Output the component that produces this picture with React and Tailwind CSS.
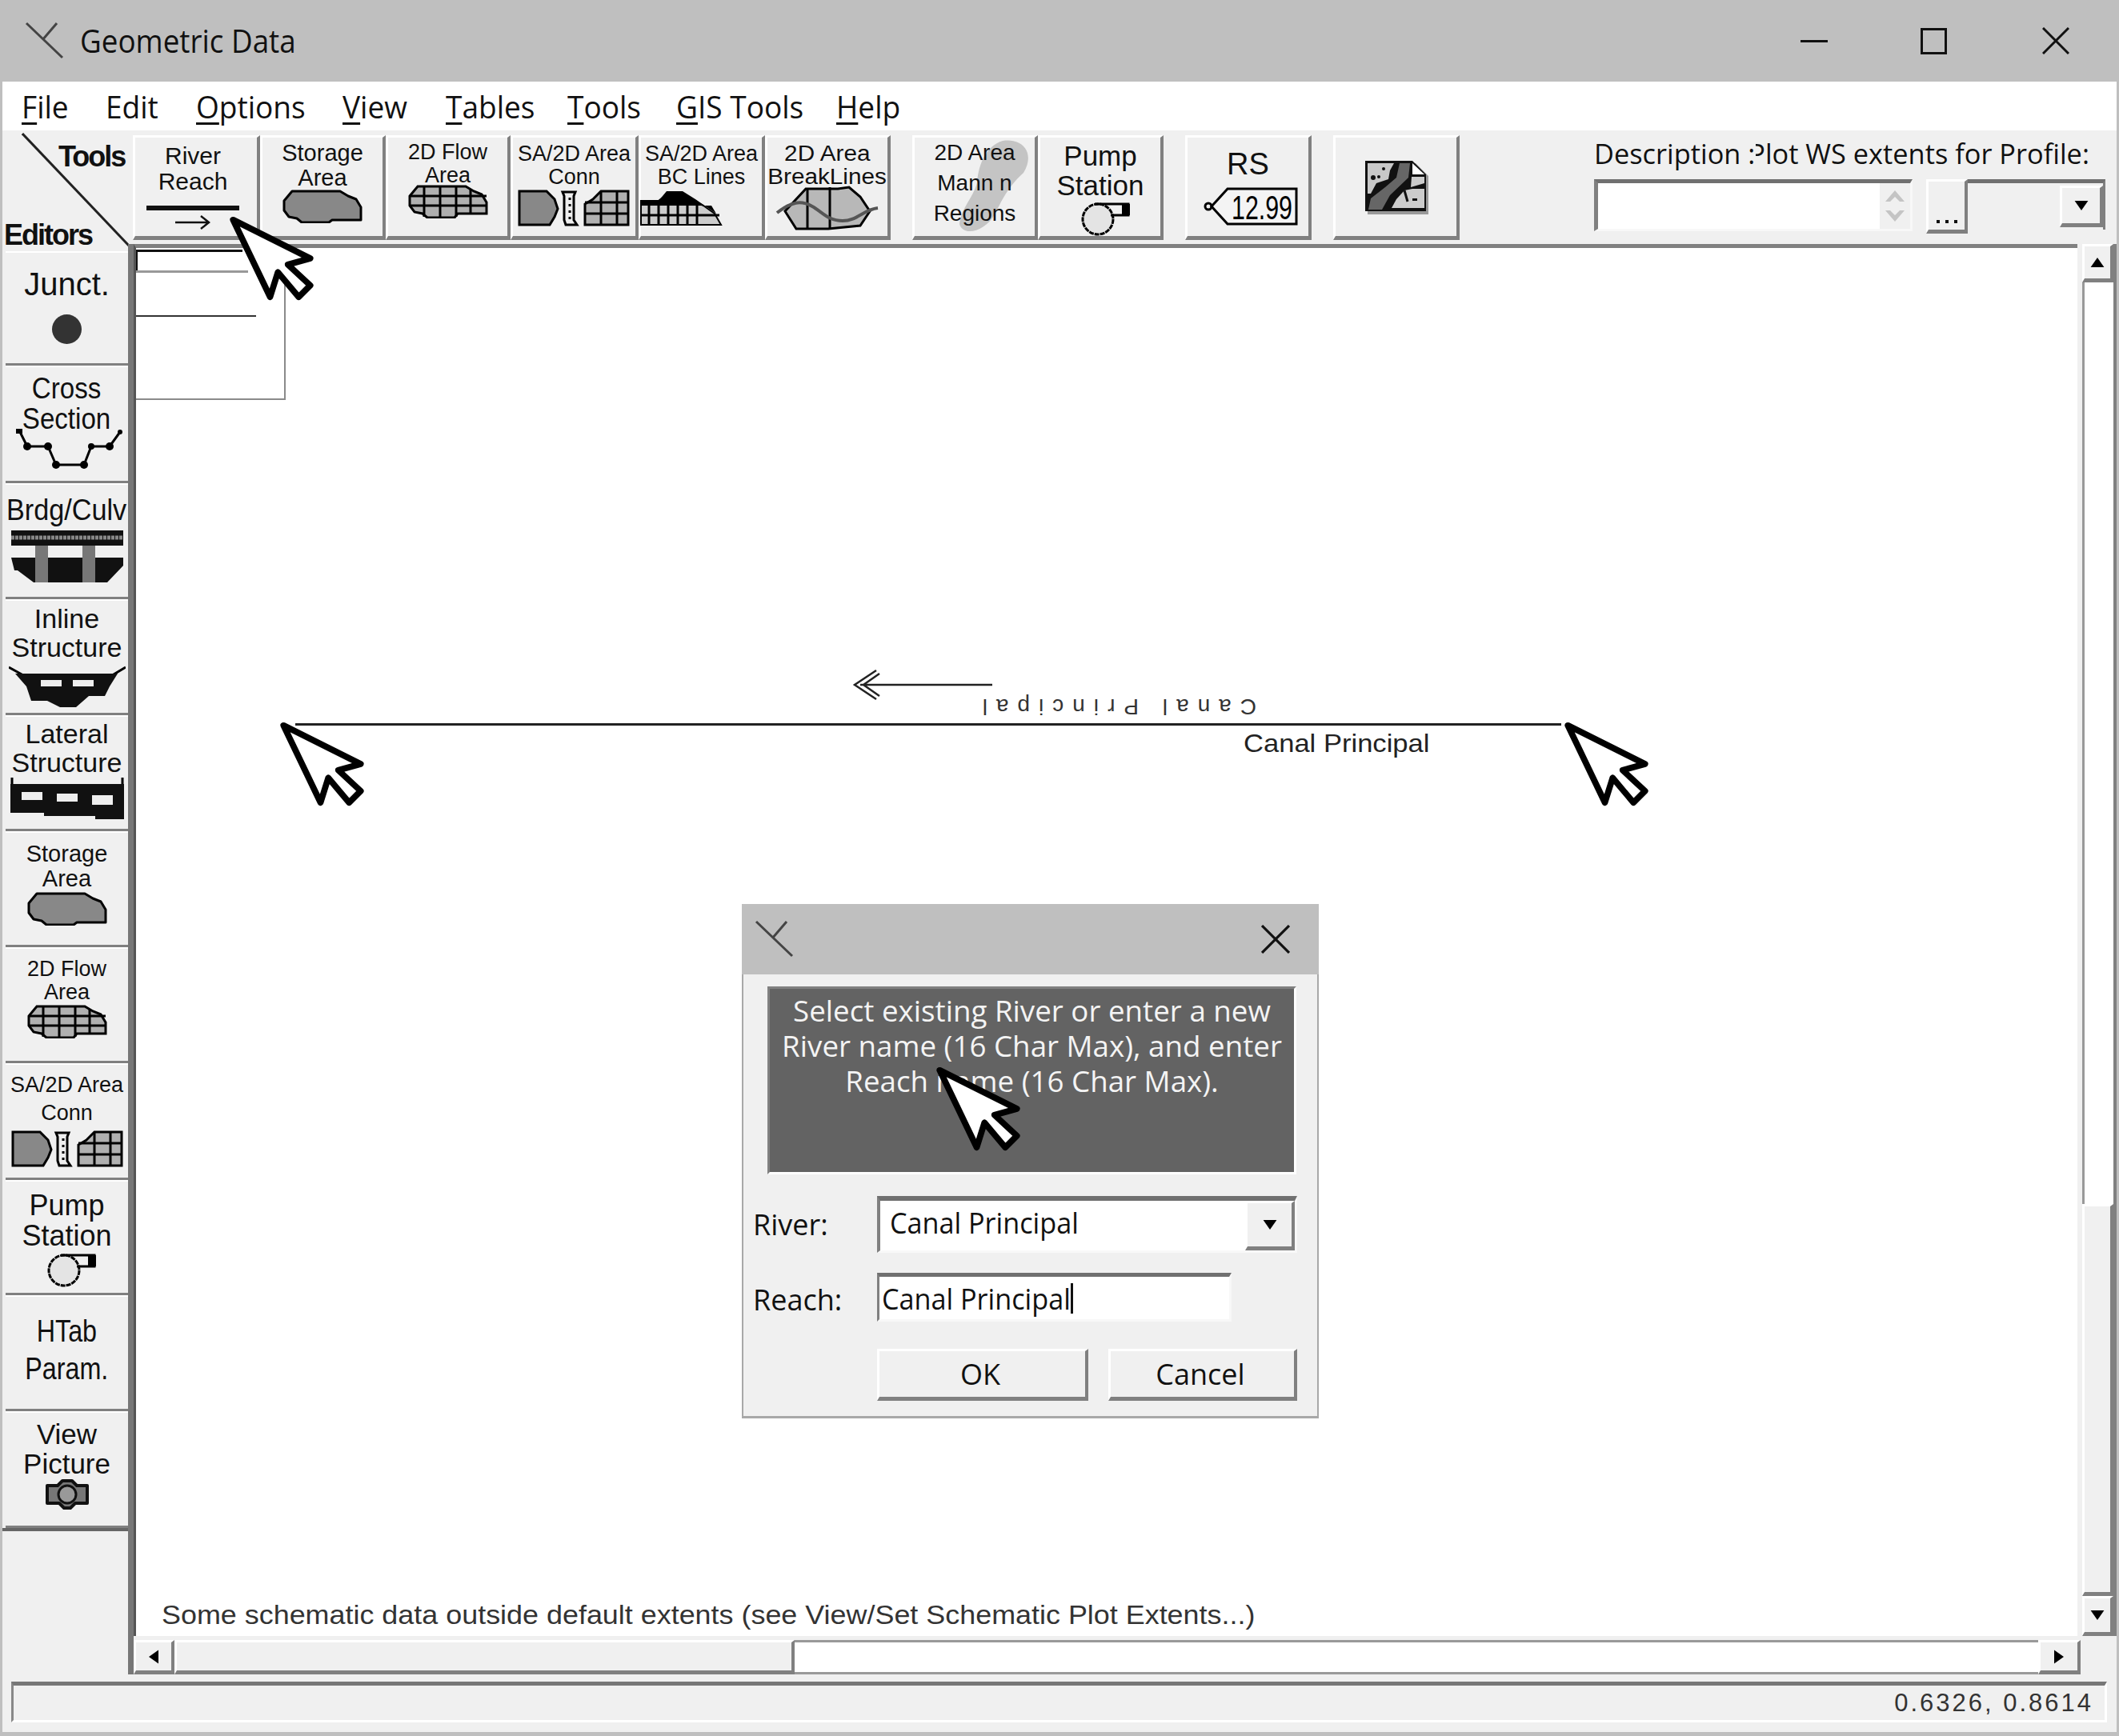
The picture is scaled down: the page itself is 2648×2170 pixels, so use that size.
import React from "react";

const ui = { fontFamily: '"Open Sans", sans-serif' };
const arial = { fontFamily: '"Liberation Sans", sans-serif' };

const Cursor = ({ className }) => (
  <svg className={className} width="109" height="108" viewBox="-6 -6 112 112">
    <path d="M0 0 L100 50 L71 58 L100 85 L85 100 L58 68 L48 100 Z" fill="#fff" stroke="#000" strokeWidth="8" strokeLinejoin="round" />
  </svg>
);

const Logo = () => (
  <svg width="50" height="50" viewBox="0 0 50 50" fill="none" stroke="#444" strokeWidth="3">
    <path d="M3 3 L48 46 M41 3 L23 24" />
  </svg>
);

const Close = ({ size = 34 }) => (
  <svg width={size} height={size} viewBox="0 0 34 34" stroke="#111" strokeWidth="3">
    <path d="M1 1 L33 33 M33 1 L1 33" />
  </svg>
);

const Blob = ({ w = 100 }) => (
  <svg width={w} height={w * 0.42} viewBox="0 0 100 42">
    <path d="M12 2 H72 L82 8 L92 12 L98 22 V38 H62 L58 41 H24 L18 36 L8 34 L2 26 V14 Z" fill="#888" stroke="#000" strokeWidth="3" strokeLinejoin="round" />
  </svg>
);

const Flow = ({ w = 100 }) => (
  <svg width={w} height={w * 0.42} viewBox="0 0 100 42">
    <path d="M12 2 H72 L82 8 L92 12 L98 22 V36 H62 L58 41 H24 L18 36 L8 34 L2 26 V14 Z" fill="#b0b0b0" stroke="#000" strokeWidth="3" />
    <path d="M2 14 H98 M2 26 H98 M20 2 V40 M40 2 V40 M60 2 V40 M78 6 V36" stroke="#000" strokeWidth="3" fill="none" />
  </svg>
);

const Conn = () => (
  <svg width="140" height="46" viewBox="0 0 140 46">
    <path d="M2 2 H36 L46 12 L50 24 L46 34 L40 44 H2 Z" fill="#888" stroke="#000" strokeWidth="3" />
    <path d="M56 3 H72 L70 8 V38 L74 44 H60 L58 38 V8 Z" fill="#eee" stroke="#000" strokeWidth="3" />
    <path d="M65 10 V38" stroke="#000" strokeWidth="3" strokeDasharray="3 5" />
    <path d="M94 12 L104 2 H138 V44 H84 V18 Z" fill="#b0b0b0" stroke="#000" strokeWidth="3" />
    <path d="M84 16 H138 M84 30 H138 M104 2 V44 M124 2 V44" stroke="#000" strokeWidth="3" />
  </svg>
);

const BcLines = () => (
  <svg width="104" height="46" viewBox="0 0 104 46">
    <path d="M2 14 H24 L34 6 H54 L68 14 L80 20 L94 30 L102 44 H2 Z" fill="#ccc" stroke="#000" strokeWidth="2" />
    <path d="M24 14 L34 2 H54 L70 12 L96 30 L90 20 H2 V14 Z" fill="#000" />
    <path d="M2 32 H100 M12 14 V44 M24 14 V44 M36 14 V44 M48 14 V44 M60 14 V44 M72 20 V44" stroke="#000" strokeWidth="3" />
  </svg>
);

const BreakLines = () => (
  <svg width="130" height="56" viewBox="0 0 130 56">
    <path d="M38 4 H78 L92 2 L106 14 L118 32 L106 50 L66 54 H26 L12 32 Z" fill="#b8b8b8" stroke="#000" strokeWidth="3" />
    <path d="M40 4 V54 M68 2 V54" stroke="#000" strokeWidth="3" />
    <path d="M2 34 C20 20 32 18 46 26 S66 44 84 44 S110 30 128 28" fill="none" stroke="#555" strokeWidth="4" />
  </svg>
);

const Pump = () => (
  <svg width="70" height="44" viewBox="0 0 70 44">
    <circle cx="22" cy="23" r="19" fill="#e4e4e4" stroke="#000" strokeWidth="3" strokeDasharray="6 1" />
    <path d="M18 4 H60 V18 H38" fill="none" stroke="#000" strokeWidth="3" />
    <rect x="52" y="4" width="10" height="14" fill="#000" />
  </svg>
);

const Tag = () => (
  <svg width="118" height="48" viewBox="0 0 118 48">
    <circle cx="6" cy="24" r="4" fill="none" stroke="#000" strokeWidth="3" />
    <path d="M10 24 L30 2 H116 V46 H30 Z" fill="#f4f4f4" stroke="#000" strokeWidth="3" />
    <text x="35" y="40" fontSize="42" fontFamily="Liberation Sans" textLength="76" lengthAdjust="spacingAndGlyphs">12.99</text>
  </svg>
);

const MapIcon = () => (
  <svg width="80" height="68" viewBox="0 0 80 68">
    <path d="M4 4 H64 L80 20 V68 H4 Z" fill="#999" />
    <path d="M1 1 H60 L77 18 V64 H1 Z" fill="#111" />
    <path d="M4 4 H37 L32 13 L30 24 L15 29 L8 42 H4 Z" fill="#c8c8c8" />
    <path d="M44 4 H57 L55 22 L32 44 L22 62 H5 L8 48 L26 34 L40 22 Z" fill="#666" />
    <path d="M60 4 L75 18 H60 Z" fill="#fff" />
    <path d="M59 21 H75 V29 L58 34 Z" fill="#ccc" />
    <path d="M50 38 L60 36 H75 V60 H34 L40 49 Z" fill="#ccc" />
    <circle cx="24" cy="11" r="2" fill="#111" /><circle cx="11" cy="22" r="3" fill="#111" /><circle cx="18" cy="21" r="2" fill="#111" />
    <rect x="60" y="48" width="6" height="3" fill="#111" />
    <path d="M50 38 L54 52" stroke="#111" strokeWidth="3" />
  </svg>
);

const Section = () => (
  <svg width="142" height="50" viewBox="0 0 142 50">
    <path d="M11 2 L21 22 H47 L57 45 H92 L101 22 H124 L137 4" fill="none" stroke="#000" strokeWidth="3" />
    <g fill="#000">
      <rect x="7" y="0" width="8" height="6" />
      <circle cx="21" cy="22" r="5" /><circle cx="47" cy="22" r="5" /><circle cx="57" cy="45" r="5" />
      <circle cx="92" cy="45" r="5" /><circle cx="101" cy="22" r="4" /><circle cx="124" cy="22" r="5" /><circle cx="137" cy="4" r="3" />
    </g>
  </svg>
);

const Bridge = () => (
  <svg width="140" height="66" viewBox="0 0 140 66">
    <rect x="0" y="0" width="140" height="19" fill="#111" />
    <path d="M0 9 H140" stroke="#888" strokeWidth="5" strokeDasharray="4 1" />
    <path d="M0 34 H140 V44 L120 65 H28 L8 50 H4 Z" fill="#111" />
    <rect x="30" y="19" width="16" height="46" fill="#777" />
    <rect x="89" y="19" width="16" height="46" fill="#777" />
  </svg>
);

const Inline = () => (
  <svg width="146" height="54" viewBox="0 0 146 54">
    <path d="M0 2 L18 12 M146 2 L126 14" stroke="#000" strokeWidth="3" />
    <path d="M8 10 H136 L126 26 L120 38 H100 L84 52 H64 L48 44 H28 L22 26 Z" fill="#111" />
    <rect x="40" y="18" width="26" height="8" fill="#eee" />
    <rect x="80" y="18" width="26" height="8" fill="#eee" />
  </svg>
);

const Lateral = () => (
  <svg width="142" height="52" viewBox="0 0 142 52">
    <path d="M2 0 V8 M140 0 V8" stroke="#000" strokeWidth="3" />
    <path d="M0 8 H142 V52 H106 V48 H42 V44 H0 Z" fill="#111" />
    <rect x="14" y="18" width="26" height="10" fill="#eee" />
    <rect x="58" y="20" width="26" height="10" fill="#eee" />
    <rect x="102" y="22" width="26" height="12" fill="#eee" />
  </svg>
);

const Camera = () => (
  <svg width="56" height="38" viewBox="0 0 56 38">
    <path d="M3 8 H16 L22 2 H34 L40 8 H53 V30 H38 L32 36 H24 L18 30 H3 Z" fill="#777" stroke="#111" strokeWidth="4" strokeLinejoin="round" />
    <circle cx="28" cy="19" r="11" fill="#999" stroke="#111" strokeWidth="3" />
  </svg>
);

// raised win9x style button
const raised = "bg-[#f0f0f0] border-t-[3px] border-l-[3px] border-b-[5px] border-r-[4px] border-t-white border-l-white border-b-[#808080] border-r-[#808080]";

const Label = ({ lines, size = 30, sx = 1, gap = 2 }) => (
  <div className="flex flex-col items-center" style={arial}>
    {lines.map((l) => (
      <span key={l} className="whitespace-nowrap text-[#111] leading-none block origin-center" style={{ fontSize: size, transform: `scaleX(${sx})`, marginBottom: gap }}>
        {l}
      </span>
    ))}
  </div>
);

const tools = [
  { w: "w-[159px]", pt: "pt-[8px]", ml: "-ml-[8px]", lines: ["River", "Reach"], size: 30, icon: (
    <div className="flex flex-col items-center mt-[13px] gap-[6px]">
      <div className="w-[116px] h-[6px] bg-[#111]" />
      <svg width="44" height="18" viewBox="0 0 44 18" fill="none" stroke="#111" strokeWidth="2.5"><path d="M0 9 H42 M32 1 L42 9 L32 17" /></svg>
    </div>
  ) },
  { w: "w-[157px]", pt: "pt-[5px]", ml: "", lines: ["Storage", "Area"], size: 29, icon: <div className="-mt-[2px]"><Blob /></div> },
  { w: "w-[156px]", pt: "pt-[5px]", ml: "", lines: ["2D Flow", "Area"], size: 27, icon: <div className="-mt-[4px]"><Flow /></div> },
  { w: "w-[160px]", pt: "pt-[7px]", ml: "", lines: ["SA/2D Area", "Conn"], size: 27, icon: <Conn /> },
  { w: "w-[158px]", pt: "pt-[7px]", ml: "", lines: ["SA/2D Area", "BC Lines"], size: 27, icon: <div className="-ml-[50px]"><BcLines /></div> },
  { w: "w-[157px]", pt: "pt-[7px]", ml: "", lines: ["2D Area", "BreakLines"], size: 27, sx: 1.1, icon: <div className="-mt-[5px]"><BreakLines /></div> },
];

const editors = [
  { h: "h-[143px]", pt: "pt-[19px]", lines: ["Junct."], size: 40, icon: <div className="w-[37px] h-[37px] rounded-full bg-[#333] mt-[16px]" /> },
  { h: "h-[147px]", pt: "pt-[9px]", lines: ["Cross", "Section"], size: 36, sx: 0.92, icon: <div className="-mt-[8px]"><Section /></div> },
  { h: "h-[145px]", pt: "pt-[14px]", lines: ["Brdg/Culv"], size: 36, sx: 0.95, icon: <div className="mt-[5px]"><Bridge /></div> },
  { h: "h-[145px]", pt: "pt-[5px]", lines: ["Inline", "Structure"], size: 34, icon: <div className="mt-[4px]"><Inline /></div> },
  { h: "h-[145px]", pt: "pt-[4px]", lines: ["Lateral", "Structure"], size: 34, icon: <Lateral /> },
  { h: "h-[145px]", pt: "pt-[12px]", lines: ["Storage", "Area"], size: 29, icon: <Blob /> },
  { h: "h-[145px]", pt: "pt-[12px]", lines: ["2D Flow", "Area"], size: 27, icon: <Flow /> },
  { h: "h-[146px]", pt: "pt-[12px]", lines: ["SA/2D Area", "Conn"], size: 27, gap: 8, icon: <Conn /> },
  { h: "h-[144px]", pt: "pt-[12px]", lines: ["Pump", "Station"], size: 36, icon: <div className="ml-[18px]"><Pump /></div> },
  { h: "h-[145px]", pt: "pt-[24px]", lines: ["HTab", "Param."], size: 38, sx: 0.85, gap: 9, icon: null },
  { h: "h-[146px]", pt: "pt-[9px]", lines: ["View", "Picture"], size: 35, icon: <Camera /> },
];

const menu = [
  ["F", "ile", "w-[105px]"],
  ["", "Edit", "w-[113px]"],
  ["O", "ptions", "w-[183px]"],
  ["V", "iew", "w-[129px]"],
  ["T", "ables", "w-[152px]"],
  ["T", "ools", "w-[136px]"],
  ["G", "IS Tools", "w-[200px]"],
  ["H", "elp", "w-[100px]"],
];

const Arrow = ({ d }) => {
  const paths = { up: "M0 10 L7 0 L14 10 Z", down: "M0 0 H14 L7 10 Z", left: "M10 0 V14 L0 7 Z", right: "M0 0 V14 L10 7 Z" };
  const vert = d === "up" || d === "down";
  return (
    <svg width={vert ? 18 : 12} height={vert ? 12 : 18} viewBox={vert ? "0 0 14 10" : "0 0 10 14"}>
      <path d={paths[d]} fill="#000" />
    </svg>
  );
};

export default function App() {
  return (
    <div className="w-[2648px] h-[2170px] flex flex-col bg-[#f0f0f0] border-x-[3px] border-b-[5px] border-[#bfbfbf] overflow-hidden text-[#111]" style={ui}>
      {/* title bar */}
      <div className="h-[102px] -mx-[3px] shrink-0 bg-[#bfbfbf] flex items-center pl-[30px]">
        <Logo />
        <span className="ml-[20px] text-[40px] leading-none inline-block origin-left scale-x-[0.92]">Geometric Data</span>
        <div className="ml-auto flex items-center">
          <div className="w-[34px] h-[3px] bg-[#111]" />
          <div className="ml-[116px] w-[33px] h-[33px] border-[3px] border-[#111]" />
          <div className="ml-[119px] mr-[62px]"><Close /></div>
        </div>
      </div>

      {/* menu */}
      <div className="h-[61px] shrink-0 bg-white flex items-center pl-[24px] text-[39px]">
        {menu.map(([u, rest, w]) => (
          <span key={rest} className={`${w} leading-none whitespace-nowrap inline-block origin-left scale-x-[0.95]`}>
            {u && <span className="underline decoration-[3px] underline-offset-[5px]">{u}</span>}
            {rest}
          </span>
        ))}
      </div>

      {/* toolbar */}
      <div className="h-[142px] shrink-0 flex relative pt-[6px]">
        <div className="w-[163px] shrink-0 relative">
          <svg className="absolute left-[24px] top-[-3px]" width="140" height="142" viewBox="0 0 140 142"><path d="M1 1 L134 141" stroke="#222" strokeWidth="3" /></svg>
          <span className="absolute left-[70px] top-[9px] text-[36px] font-bold leading-none tracking-[-2px]" style={arial}>Tools</span>
          <span className="absolute left-[2px] top-[107px] text-[36px] font-bold leading-none tracking-[-2px]" style={arial}>Editors</span>
        </div>
        {tools.map((t) => (
          <div key={t.lines[1]} className={`${t.w} h-[131px] shrink-0 ${raised} flex flex-col items-center ${t.pt}`}>
            <div className={`${t.ml} flex flex-col items-center`}>
              <Label lines={t.lines} size={t.size} sx={t.sx} />
              {t.icon}
            </div>
          </div>
        ))}
        <div className="w-[27px] shrink-0" />
        <div className={`w-[157px] h-[131px] shrink-0 ${raised} relative flex flex-col items-center pt-[5px]`}>
          <svg className="absolute left-[28px] top-[0px]" width="124" height="124" viewBox="0 0 124 124">
            <path d="M82 4 C110 0 122 22 108 44 C90 60 82 76 72 96 C60 118 32 124 28 108 C30 88 46 74 50 56 C52 32 62 10 82 4 Z" fill="#c4c4c4" />
          </svg>
          <div className="relative">
            <Label lines={["2D Area", "Mann n", "Regions"]} size={28} gap={10} />
          </div>
        </div>
        <div className={`w-[157px] h-[131px] shrink-0 ${raised} flex flex-col items-center pt-[5px]`}>
          <Label lines={["Pump", "Station"]} size={35} />
          <div className="ml-[20px]"><Pump /></div>
        </div>
        <div className="w-[27px] shrink-0" />
        <div className={`w-[158px] h-[131px] shrink-0 ${raised} flex flex-col items-center pt-[14px]`}>
          <Label lines={["RS"]} size={38} />
          <div className="mt-[8px] ml-[6px]"><Tag /></div>
        </div>
        <div className="w-[27px] shrink-0" />
        <div className={`w-[158px] h-[131px] shrink-0 ${raised} flex items-center justify-center`}>
          <MapIcon />
        </div>
        <div className="ml-[168px] w-[640px] shrink-0 flex flex-col">
          <div className="text-[34px] leading-none whitespace-nowrap flex origin-left scale-x-[1.01] mt-[6px]">
            <span className="relative z-10 bg-[#f0f0f0] pr-[1px]">Description :</span>
            <span className="-ml-[9px]">Plot WS extents for Profile:</span>
          </div>
          <div className="mt-[15px] flex h-[66px]">
            <div className="w-[398px] h-[65px] bg-white border-t-[5px] border-l-[5px] border-b-[3px] border-r-[3px] border-t-[#707070] border-l-[#808080] border-b-[#f8f8f8] border-r-[#f8f8f8] flex justify-end">
              <div className="w-[38px] bg-[#f0f0f0] flex flex-col items-center justify-around py-[3px]">
                <svg width="24" height="14" viewBox="0 0 24 14"><path d="M0 14 L12 0 L24 14 H18 L12 8 L6 14 Z" fill="#c4c4c4" /></svg>
                <svg width="24" height="14" viewBox="0 0 24 14"><path d="M0 0 L12 14 L24 0 H18 L12 6 L6 0 Z" fill="#c4c4c4" /></svg>
              </div>
            </div>
            <div className="w-[17px]" />
            <div className={`w-[52px] h-[68px] ${raised} flex items-end justify-center pb-[8px]`}>
              <span className="flex gap-[7px]"><i className="w-[4px] h-[4px] bg-[#111] block" /><i className="w-[4px] h-[4px] bg-[#111] block" /><i className="w-[4px] h-[4px] bg-[#111] block" /></span>
            </div>
            <div className="w-[172px] h-[63px] border-t-[5px] border-r-[3px] border-t-[#707070] border-r-[#808080] flex justify-end">
              <div className={`w-[54px] h-[52px] ${raised} flex items-center justify-center mt-[3px]`}>
                <Arrow d="down" />
              </div>
            </div>
          </div>
        </div>
      </div>

      {/* body */}
      <div className="flex-1 min-h-0 flex relative">
        <div className="w-[164px] shrink-0 flex flex-col border-r-[7px] border-r-[#777] pl-[4px]">
          <div className="h-[9px] shrink-0" />
          {editors.map((e) => (
            <div key={e.lines.join()} className={`${e.h} shrink-0 border-b-[3px] border-b-[#808080] border-t-[2px] border-t-white flex flex-col items-center ${e.pt}`}>
              <Label lines={e.lines} size={e.size} sx={e.sx} gap={e.gap} />
              {e.icon}
            </div>
          ))}
          <div className="h-[4px] shrink-0 -ml-[4px] bg-[#666]" />
        </div>

        <div className="flex-1 min-w-0 flex flex-col">
          <div className="flex-1 min-h-0 flex">
            {/* canvas */}
            <div className="flex-1 min-w-0 relative bg-white border-t-[5px] border-t-[#808080] border-l-[3px] border-l-[#555] overflow-hidden">
              <div className="absolute left-0 top-[3px] w-[187px] h-[187px] border-r-[2px] border-b-[2px] border-[#8a8a8a]" />
              <div className="absolute left-0 top-[2px] w-[133px] h-[3px] bg-[#111]" />
              <div className="absolute left-0 top-[2px] w-[2px] h-[26px] bg-[#111]" />
              <div className="absolute left-0 top-[28px] w-[140px] h-[3px] bg-[#999]" />
              <div className="absolute left-0 top-[84px] w-[150px] h-[2px] bg-[#333]" />
              <div className="absolute left-[199px] top-[594px] w-[1582px] h-[3px] bg-[#222]" />
              <svg className="absolute left-[895px] top-[526px]" width="180" height="40" viewBox="0 0 180 40" fill="none" stroke="#222" strokeWidth="2.5">
                <path d="M175 20 H10 M30 2 L3 20 L30 38 M34 6 L14 20 L34 34" />
              </svg>
              <span className="absolute left-[1050px] top-[559px] w-[350px] text-[28px] leading-none rotate-180 whitespace-nowrap tracking-[11px] text-[#333]" style={arial}>Canal Principal</span>
              <span className="absolute left-[1384px] top-[603px] text-[32px] leading-none whitespace-nowrap inline-block origin-left scale-x-[1.08] text-[#222]" style={arial}>Canal Principal</span>
              <span className="absolute left-[32px] top-[1692px] text-[33px] leading-none whitespace-nowrap inline-block origin-left scale-x-[1.088] text-[#333]" style={arial}>Some schematic data outside default extents (see View/Set Schematic Plot Extents...)</span>
            </div>
            {/* vertical scrollbar */}
            <div className="w-[49px] shrink-0 flex flex-col bg-[#f0f0f0] pl-[6px] border-r-[4px] border-r-[#808080]">
              <div className={`h-[48px] shrink-0 ${raised} flex items-center justify-center`}><Arrow d="up" /></div>
              <div className="h-[1152px] shrink-0 bg-white border-l-[3px] border-l-[#999]" />
              <div className={`flex-1 ${raised}`} />
              <div className={`h-[50px] shrink-0 ${raised} flex items-center justify-center`}><Arrow d="down" /></div>
            </div>
          </div>
          {/* horizontal scrollbar */}
          <div className="h-[48px] shrink-0 flex items-stretch mr-[45px] pt-[5px]">
            <div className={`w-[51px] shrink-0 ${raised} flex items-center justify-center`}><Arrow d="left" /></div>
            <div className={`w-[775px] shrink-0 ${raised}`} />
            <div className="flex-1 bg-white border-t-[3px] border-t-[#999] border-b-[3px] border-b-[#999]" />
            <div className={`w-[53px] shrink-0 ${raised} flex items-center justify-center`}><Arrow d="right" /></div>
          </div>
        </div>
      </div>

      {/* status bar */}
      <div className="h-[72px] shrink-0 pt-[9px] pb-[12px] pl-[11px] pr-[12px]">
        <div className="h-full border-t-[5px] border-t-[#777] border-l-[3px] border-l-[#888] border-b-[3px] border-b-white border-r-[3px] border-r-white flex items-center justify-end pr-[14px]">
          <span className="text-[31px] leading-none tracking-[3px] text-[#333]" style={arial}>0.6326, 0.8614</span>
        </div>
      </div>

      {/* cursors */}
      <Cursor className="absolute left-[285px] top-[269px]" />
      <Cursor className="absolute left-[348px] top-[901px]" />
      <Cursor className="absolute left-[1953px] top-[901px]" />

      {/* dialog */}
      <div className="absolute left-[927px] top-[1130px] w-[721px] h-[643px] bg-[#f0f0f0] border-x-[2px] border-b-[3px] border-[#a8a8a8] flex flex-col">
        <div className="h-[88px] shrink-0 -mx-[2px] bg-[#bfbfbf] flex items-center justify-between pl-[15px] pr-[36px]">
          <Logo />
          <Close size={36} />
        </div>
        <div className="mt-[15px] ml-[30px] mr-[26px] h-[235px] shrink-0 bg-[#636363] border-[3px] border-t-[#808080] border-l-[#808080] border-b-white border-r-white text-center text-[#f4f4f4] text-[36px] leading-[44px] pt-[6px]">
          <span className="block whitespace-nowrap scale-x-[1.02]">Select existing River or enter a new</span>
          <span className="block whitespace-nowrap scale-x-[1.02]">River name (16 Char Max), and enter</span>
          <span className="block whitespace-nowrap scale-x-[1.02]">Reach name (16 Char Max).</span>
        </div>
        <div className="mt-[27px] flex items-center pl-[12px] pr-[25px] text-[36px]">
          <span className="w-[155px] shrink-0 inline-block origin-left scale-x-[1.0]">River:</span>
          <div className="flex-1 h-[71px] bg-white border-t-[6px] border-l-[4px] border-b-[3px] border-r-[3px] border-t-[#707070] border-l-[#808080] border-b-[#f8f8f8] border-r-[#f8f8f8] flex items-center justify-between pl-[12px]">
            <span className="inline-block origin-left scale-x-[0.95] -mt-[6px]">Canal Principal</span>
            <div className={`w-[62px] h-full ${raised} flex items-center justify-center`}><Arrow d="down" /></div>
          </div>
        </div>
        <div className="mt-[25px] flex items-center pl-[12px] text-[36px]">
          <span className="w-[155px] shrink-0 inline-block origin-left scale-x-[1.0] mt-[6px]">Reach:</span>
          <div className="w-[443px] h-[61px] bg-white border-t-[5px] border-l-[3px] border-b-[3px] border-r-[3px] border-t-[#707070] border-l-[#808080] border-b-[#f8f8f8] border-r-[#f8f8f8] flex items-center pl-[3px]">
            <span className="inline-block whitespace-nowrap scale-x-[0.95] origin-left mt-[3px]">Canal Principal</span>
            <div className="w-[3px] h-[38px] bg-[#111] -ml-[12px]" />
          </div>
        </div>
        <div className="mt-[34px] flex pl-[167px] gap-[25px] text-[36px]">
          <div className={`w-[264px] h-[65px] ${raised} flex items-center justify-center pr-[5px]`}>OK</div>
          <div className={`w-[236px] h-[65px] ${raised} flex items-center justify-center pr-[5px]`}>Cancel</div>
        </div>
      </div>
      <Cursor className="absolute left-[1168px] top-[1332px]" />
    </div>
  );
}
